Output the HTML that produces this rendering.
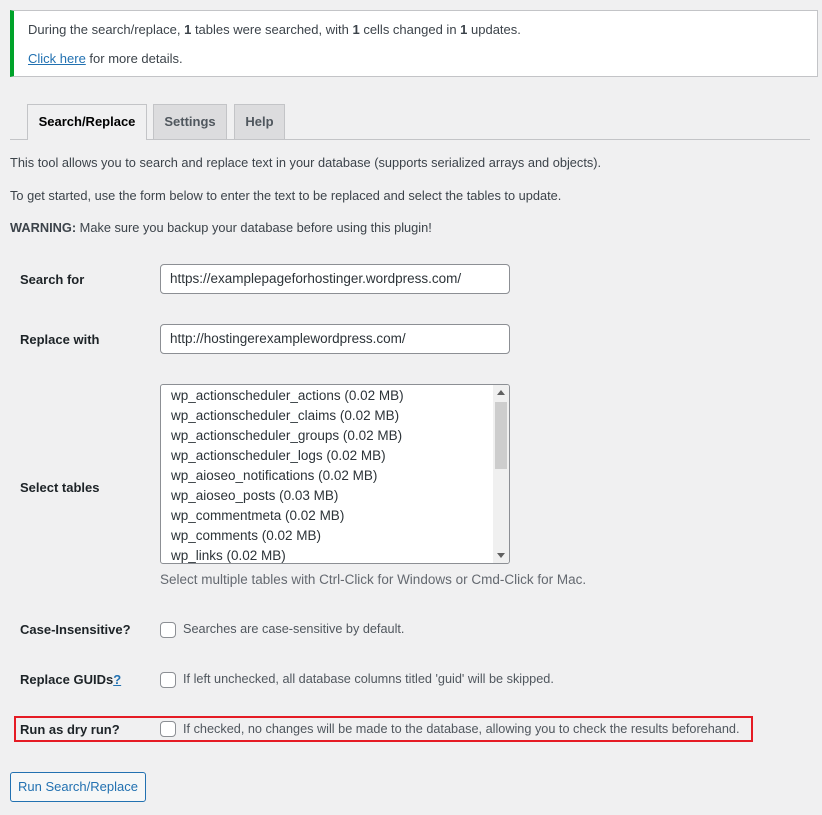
<!DOCTYPE html><html><head><style>
body{margin:0;width:822px;height:815px;background:#f0f0f1;font-family:"Liberation Sans",sans-serif;font-size:13px;color:#3c434a;position:relative;overflow:hidden}
.a{position:absolute;white-space:nowrap}
.notice{left:10px;top:10px;width:808px;height:67px;background:#fff;border:1px solid #c3c4c7;border-left:4px solid #00a32a;box-sizing:border-box}
.tab{top:104px;height:35px;box-sizing:border-box;border:1px solid #c3c4c7;border-bottom:none;font-weight:bold;font-size:13px;line-height:34px;text-align:center}
.lbl{left:20px;font-weight:bold;font-size:13px;color:#1d2327}
.inp{left:160px;width:350px;height:30px;box-sizing:border-box;border:1px solid #8c8f94;border-radius:4px;background:#fff;padding-left:9px;line-height:28px;font-size:13.5px;color:#2c3338}
.cb{left:160px;width:16px;height:16px;box-sizing:border-box;border:1px solid #8c8f94;border-radius:4px;background:#fff}
.d{left:183px;color:#50575e;font-size:12.7px}
</style></head><body>
<div class="a notice"></div>
<div class="a" style="left:28px;top:22px">During the search/replace, <b>1</b> tables were searched, with <b>1</b> cells changed in <b>1</b> updates.</div>
<div class="a" style="left:28px;top:51px"><span style="color:#2271b1;text-decoration:underline">Click here</span> for more details.</div>
<div class="a" style="left:10px;top:139px;width:800px;border-top:1px solid #c3c4c7"></div>
<div class="a tab" style="left:27px;width:120px;background:#f0f0f1;height:36px;color:#000">Search/Replace</div>
<div class="a tab" style="left:153px;width:74px;background:#dcdcde;color:#50575e">Settings</div>
<div class="a tab" style="left:234px;width:51px;background:#dcdcde;color:#50575e">Help</div>
<div class="a" style="left:10px;top:155px;font-size:12.8px">This tool allows you to search and replace text in your database (supports serialized arrays and objects).</div>
<div class="a" style="left:10px;top:188px;font-size:12.8px">To get started, use the form below to enter the text to be replaced and select the tables to update.</div>
<div class="a" style="left:10px;top:220px;font-size:12.8px"><b>WARNING:</b> Make sure you backup your database before using this plugin!</div>
<div class="a lbl" style="top:272px">Search for</div>
<div class="a inp" style="top:264px">https://examplepageforhostinger.wordpress.com/</div>
<div class="a lbl" style="top:332px">Replace with</div>
<div class="a inp" style="top:324px">http://hostingerexamplewordpress.com/</div>
<div class="a lbl" style="top:480px">Select tables</div>
<div class="a" style="left:160px;top:384px;width:350px;height:180px;box-sizing:border-box;border:1px solid #8c8f94;border-radius:3px;background:#fff;overflow:hidden;font-size:13.5px;color:#2c3338;line-height:20px;padding:1px 0 0 10px">
wp_actionscheduler_actions (0.02 MB)<br>wp_actionscheduler_claims (0.02 MB)<br>wp_actionscheduler_groups (0.02 MB)<br>wp_actionscheduler_logs (0.02 MB)<br>wp_aioseo_notifications (0.02 MB)<br>wp_aioseo_posts (0.03 MB)<br>wp_commentmeta (0.02 MB)<br>wp_comments (0.02 MB)<br>wp_links (0.02 MB)
<div style="position:absolute;right:0;top:0;width:16px;height:178px;background:#f0f0f0"></div>
<div style="position:absolute;right:2px;top:17px;width:12px;height:67px;background:#cdcdcd"></div>
<div style="position:absolute;right:4px;top:5px;border:4px solid transparent;border-bottom:5px solid #606060;border-top:none"></div>
<div style="position:absolute;right:4px;bottom:5px;border:4px solid transparent;border-top:5px solid #606060;border-bottom:none"></div>
</div>
<div class="a" style="left:160px;top:572px;color:#646970;font-size:13.5px">Select multiple tables with Ctrl-Click for Windows or Cmd-Click for Mac.</div>
<div class="a lbl" style="top:622px">Case-Insensitive?</div>
<div class="a cb" style="top:622px"></div>
<div class="a d" style="top:622px">Searches are case-sensitive by default.</div>
<div class="a lbl" style="top:672px">Replace GUIDs<span style="color:#2271b1;text-decoration:underline">?</span></div>
<div class="a cb" style="top:672px"></div>
<div class="a d" style="top:672px">If left unchecked, all database columns titled 'guid' will be skipped.</div>
<div class="a" style="left:14px;top:716px;width:739px;height:26px;box-sizing:border-box;border:2px solid #e51b24"></div>
<div class="a lbl" style="top:722px">Run as dry run?</div>
<div class="a cb" style="top:721px"></div>
<div class="a d" style="top:722px">If checked, no changes will be made to the database, allowing you to check the results beforehand.</div>
<div class="a" style="left:10px;top:772px;width:136px;height:30px;box-sizing:border-box;border:1px solid #2271b1;border-radius:3px;background:#f6f7f7;color:#2271b1;text-align:center;line-height:28px">Run Search/Replace</div>
</body></html>
